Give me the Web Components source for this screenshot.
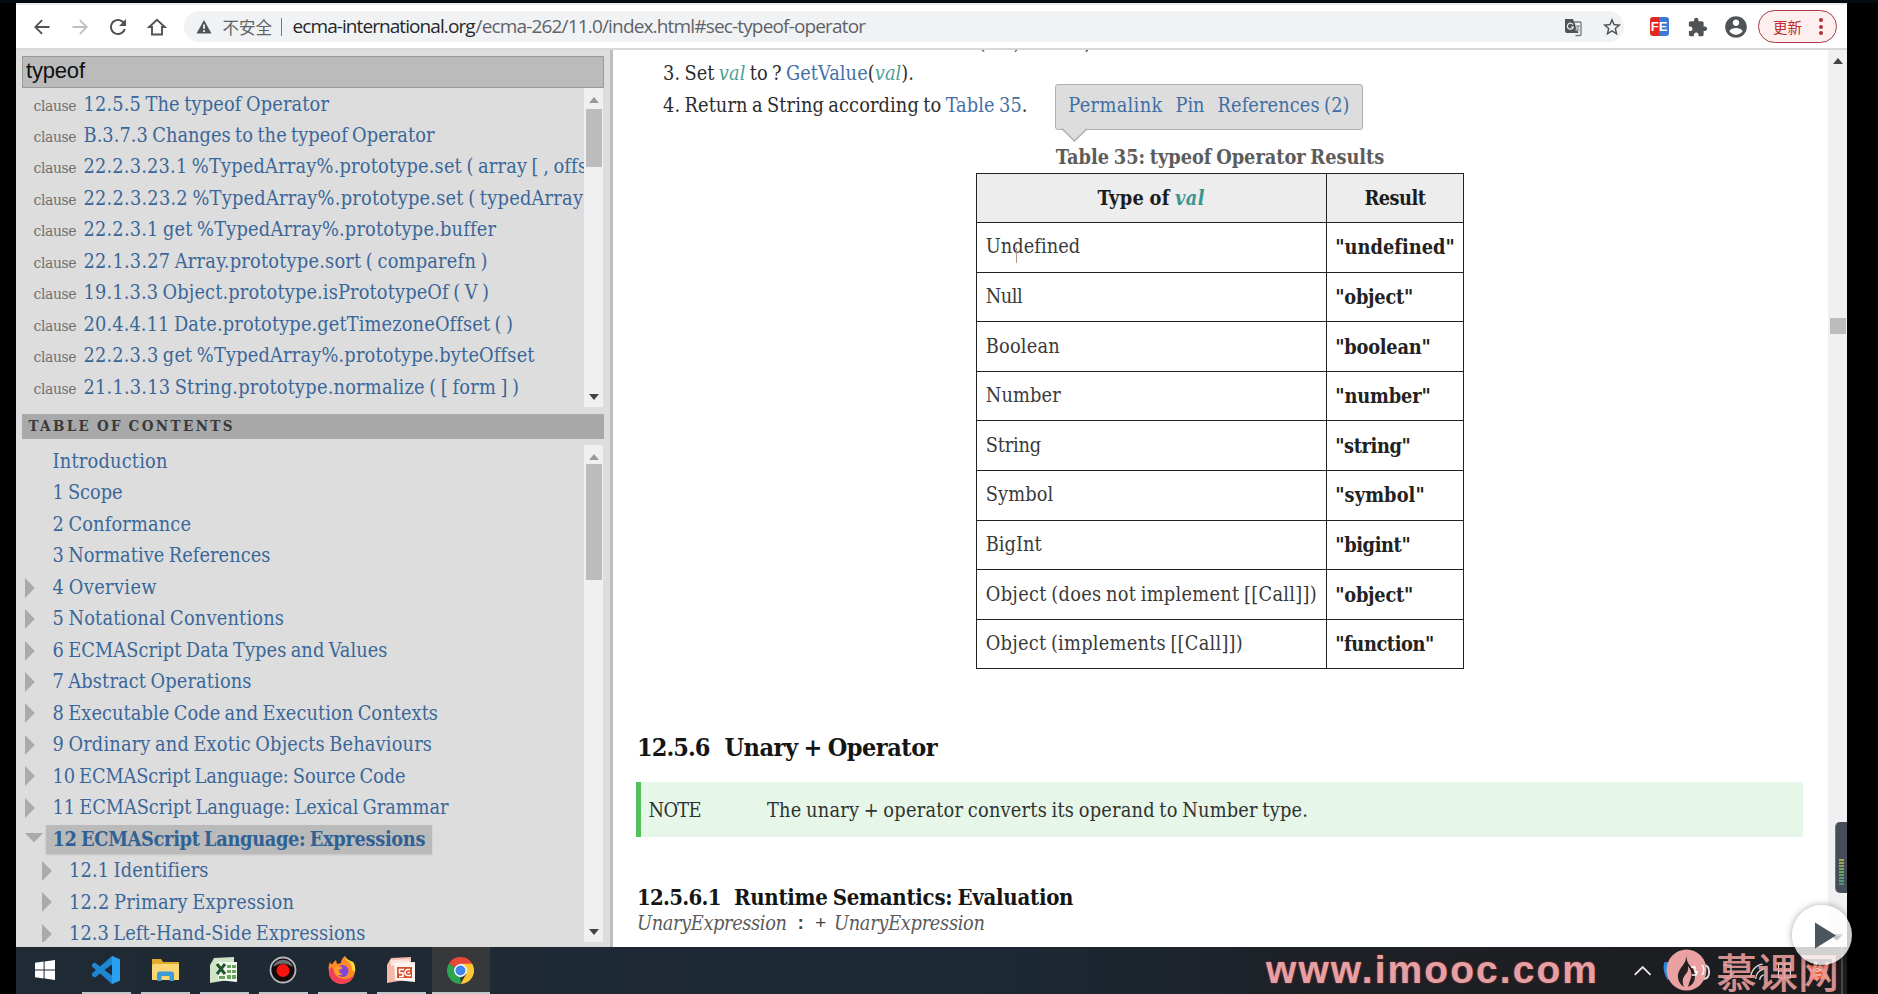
<!DOCTYPE html>
<html lang="zh-CN">
<head>
<meta charset="utf-8">
<title>ECMAScript 2020 Language Specification</title>
<style>
  html, body { margin: 0; background: #000; height: 994px; overflow: hidden; }
  body {
    --serif: "DejaVu Serif Condensed", "DejaVu Serif", "Liberation Serif", serif;
    --size: 19.8px;
    --link: #3a6799;
    font-family: var(--serif);
    font-size: var(--size);
    color: #3a3a3a;
    word-spacing: -1.4px;
  }
</style>
</head>
<body>
<screen-frame>
  <browser-bar slot="bar"></browser-bar>

  <side-panel slot="side">
    <result-item slot="result" w="245.5">12.5.5 The typeof Operator</result-item>
    <result-item slot="result" w="351">B.3.7.3 Changes to the typeof Operator</result-item>
    <result-item slot="result" w="503">22.2.3.23.1 %TypedArray%.prototype.set ( array [ , offs</result-item>
    <result-item slot="result" w="499.5">22.2.3.23.2 %TypedArray%.prototype.set ( typedArray</result-item>
    <result-item slot="result" w="412">22.2.3.1 get %TypedArray%.prototype.buffer</result-item>
    <result-item slot="result" w="404">22.1.3.27 Array.prototype.sort ( comparefn )</result-item>
    <result-item slot="result" w="405.5">19.1.3.3 Object.prototype.isPrototypeOf ( V )</result-item>
    <result-item slot="result" w="429">20.4.4.11 Date.prototype.getTimezoneOffset ( )</result-item>
    <result-item slot="result" w="450.5">22.2.3.3 get %TypedArray%.prototype.byteOffset</result-item>
    <result-item slot="result" w="435.5">21.1.3.13 String.prototype.normalize ( [ form ] )</result-item>

    <toc-item slot="toc" leaf w="115">Introduction</toc-item>
    <toc-item slot="toc" leaf w="70">1 Scope</toc-item>
    <toc-item slot="toc" leaf w="138.5">2 Conformance</toc-item>
    <toc-item slot="toc" leaf w="218">3 Normative References</toc-item>
    <toc-item slot="toc" w="104">4 Overview</toc-item>
    <toc-item slot="toc" w="231.5">5 Notational Conventions</toc-item>
    <toc-item slot="toc" w="335">6 ECMAScript Data Types and Values</toc-item>
    <toc-item slot="toc" w="199">7 Abstract Operations</toc-item>
    <toc-item slot="toc" w="385.5">8 Executable Code and Execution Contexts</toc-item>
    <toc-item slot="toc" w="379.5">9 Ordinary and Exotic Objects Behaviours</toc-item>
    <toc-item slot="toc" w="353">10 ECMAScript Language: Source Code</toc-item>
    <toc-item slot="toc" w="396">11 ECMAScript Language: Lexical Grammar</toc-item>
    <toc-item slot="toc" open w="373">12 ECMAScript Language: Expressions</toc-item>
    <toc-item slot="toc" sub w="139">12.1 Identifiers</toc-item>
    <toc-item slot="toc" sub w="225">12.2 Primary Expression</toc-item>
    <toc-item slot="toc" sub w="296.5">12.3 Left-Hand-Side Expressions</toc-item>
  </side-panel>

  <spec-page slot="page"></spec-page>
  <task-bar slot="tasks"></task-bar>
</screen-frame>

<script>
const fits = [];
function define(name, css, html, setup) {
  const t = document.createElement('template');
  t.innerHTML = `<style>*{box-sizing:border-box}:host{box-sizing:border-box}${css}</style>${html}`;
  customElements.define(name, class extends HTMLElement {
    connectedCallback() {
      if (this.shadowRoot) return;
      this.attachShadow({ mode: 'open' }).append(t.content.cloneNode(true));
      if (setup) setup(this, this.shadowRoot);
    }
  });
}

/* A run of text spaced out to a measured width (attribute w). */
define('fit-text', `
  :host{display:inline-block;white-space:pre}
  span{display:inline-block;white-space:pre}`,
  `<span><slot></slot></span>`, el => fits.push(el));

define('scroll-bar', `
  :host{display:flex;flex-direction:column;align-items:center;width:19px;background:#f0f0f2;flex:none}
  svg{width:10px;height:6px;flex:none}
  .up{margin-top:var(--up,9px);fill:var(--upc,#999)}
  .thumb{width:16px;background:#bcbcbe;margin-top:var(--t);height:var(--h);flex:none}
  .down{margin-top:auto;margin-bottom:var(--dn,7px);fill:var(--dnc,#444)}`,
  `<svg class="up" viewBox="0 0 10 6"><path d="M0 6 5 0l5 6z"/></svg><div class="thumb"></div><svg class="down" viewBox="0 0 10 6"><path d="M0 0h10L5 6z"/></svg>`);

define('screen-frame', `
  :host{display:flex;flex-direction:column;width:1878px;height:994px;padding:3px 31px 0 16px;background:linear-gradient(#050c11 0 3px,#000 3px);position:relative;overflow:hidden}
  .mid{display:flex;height:898px;flex:none;background:#fff}
  .float{position:absolute;left:1792px;top:905px;width:60px;height:60px;border-radius:50%;background:rgba(255,255,255,.8);box-shadow:0 0 7px rgba(0,0,0,.35);display:flex;align-items:center;justify-content:center}
  .meter{position:absolute;left:1835px;top:822px;width:12px;height:71px;background:#454e58;border-radius:5px 0 0 5px;border-left:1px solid #6b747c;display:flex;align-items:flex-end;padding:0 0 7px 3px}
  .meter i{width:5px;height:27px;background:repeating-linear-gradient(rgba(69,78,88,0) 0 2px,#454e58 2px 3px),linear-gradient(#b3a84e,#61a865 50%,#4d8f88)}`,
  `<slot name="bar"></slot><div class="mid"><slot name="side"></slot><slot name="page"></slot></div><slot name="tasks"></slot>
   <div class="meter"><i></i></div>
   <div class="float"><svg width="60" height="60" viewBox="0 0 60 60"><path d="M40 31h9l-4.500 4.500z" fill="#c3c3c3"/><path d="M23 17.500v26L44 30.500z" fill="#4b555e"/></svg></div>`);

define('browser-bar', `
  :host{display:flex;align-items:center;height:47px;margin-bottom:-1px;position:relative;flex:none;background:#fff;border-top:2px solid #e6eaee;border-bottom:2px solid #d6d8da;padding:0 0 0 14px;font-family:"Open Sans","Noto Sans",sans-serif;font-size:19px;color:#5f6368;word-spacing:0}
  svg{width:24px;height:24px;flex:none;fill:#505356}
  .nav{display:flex;gap:14.200px}
  .pill{display:flex;align-items:center;height:31px;width:1440px;margin-left:15px;background:#f1f2f4;border-radius:16px;padding:0 0 0 8px;line-height:29px}
  .cjk{font:16.500px/30px "Noto Sans CJK SC",sans-serif;margin-left:7px;width:50px;white-space:nowrap}
  .sep{width:1px;height:18px;background:#777;margin:0 11px 0 8px}
  .host{color:#25282b;width:183px}
  .tr{margin-left:auto;width:20px}
  .star{width:20px;margin:0 2px 0 19px}
  .fe{margin-left:26px;width:19px;height:19px;border-radius:3px;background:linear-gradient(90deg,#e3261f 50%,#3b79d8 50%);color:#fff;font:bold 13px/19px "Liberation Sans",sans-serif;text-align:center}
  .pz{width:20px;height:20px;margin:0 0 0 19px}
  .av{width:26px;height:26px;margin-left:15.500px}
  .upd{display:flex;align-items:center;margin-left:9px;width:79px;height:33px;border:1.500px solid #ab3b42;border-radius:17px;background:#fdefee;color:#bd2e2b;font:14.500px/30px "Noto Sans CJK SC",sans-serif;padding-left:14px}
  .dots{display:grid;gap:2.500px;margin-left:17px}.dots i{width:4px;height:4px;border-radius:50%;background:#b3313a}`,
  `<div class="nav">
    <svg viewBox="0 0 24 24"><path d="M19.500 11.100H7.600l5.200-5.300-1.300-1.300L4 12l7.500 7.500 1.300-1.300-5.200-5.300h11.900z"/></svg>
    <svg viewBox="0 0 24 24" style="fill:#bdbfc1"><path d="M4.500 11.100h11.900l-5.200-5.300 1.300-1.300L20 12l-7.500 7.500-1.300-1.300 5.200-5.300H4.500z"/></svg>
    <svg viewBox="0 0 24 24"><path d="M17.650 6.350C16.200 4.900 14.210 4 12 4c-4.420 0-7.990 3.580-7.990 8s3.570 8 7.990 8c3.730 0 6.840-2.550 7.730-6h-2.080c-.82 2.330-3.040 4-5.650 4-3.310 0-6-2.690-6-6s2.690-6 6-6c1.660 0 3.140.69 4.220 1.780L13 11h7V4l-2.350 2.350z"/></svg>
    <svg viewBox="0 0 24 24"><path d="M4.200 12 12 4.700l7.800 7.300H17v7.500H7V12z" fill="none" stroke="#505356" stroke-width="1.900"/></svg>
  </div>
  <div class="pill">
    <svg viewBox="0 0 24 24"><path d="M12 5 4.500 18.500h15z"/><path d="M11.200 9.500h1.700v4.300h-1.700zM11.200 15.200h1.700v1.700h-1.700z" fill="#fff"/></svg>
    <span class="cjk">不安全</span><span class="sep"></span>
    <fit-text class="host" w="183">ecma-international.org</fit-text><fit-text w="390.500">/ecma-262/11.0/index.html#sec-typeof-operator</fit-text>
    <svg class="tr" viewBox="0 0 20 20"><path d="M2 2h8l5.500 14H4a2 2 0 0 1-2-2z"/><path d="M10.500 5H17a1 1 0 0 1 1 1v11.500a1 1 0 0 1-1 1h-4.500" fill="none" stroke="#777" stroke-width="1.300"/><path d="M10 7.700a3 3 0 1 0 .3 2.300H7.800M12.500 9h4.500M15 9c0 2-1 3.500-2.300 4.500M13 10.500l3.500 3.500" fill="none" stroke="#f1f2f4" stroke-width="1.200"/><path d="M12.500 9h4.500M15.500 9c0 2-1 3.500-2.300 4.500M13.500 10.500l3 3.500" fill="none" stroke="#777"/></svg>
    <svg class="star" viewBox="1 1 22 22"><path d="M22 9.240l-7.190-.62L12 2 9.190 8.630 2 9.240l5.460 4.730L5.820 21 12 17.270 18.180 21l-1.630-7.030L22 9.240zM12 15.400l-3.760 2.270 1-4.280-3.320-2.880 4.380-.38L12 6.100l1.710 4.040 4.380.38-3.320 2.880 1 4.280L12 15.400z"/></svg>
  </div>
  <span class="fe">FE</span>
  <svg class="pz" viewBox="1 0 23 23"><path d="M20.500 11H19V7c0-1.100-.9-2-2-2h-4V3.500C13 2.120 11.880 1 10.500 1S8 2.120 8 3.500V5H4c-1.100 0-1.990.9-1.990 2v3.800H3.500c1.490 0 2.700 1.210 2.700 2.700s-1.210 2.700-2.700 2.700H2V20c0 1.100.9 2 2 2h3.800v-1.500c0-1.490 1.210-2.700 2.700-2.700 1.490 0 2.700 1.210 2.700 2.700V22H17c1.100 0 2-.9 2-2v-4h1.500c1.380 0 2.500-1.120 2.500-2.500S21.880 11 20.500 11z"/></svg>
  <svg class="av" viewBox="0 0 24 24"><path d="M12 2C6.480 2 2 6.480 2 12s4.480 10 10 10 10-4.480 10-10S17.520 2 12 2zm0 3c1.660 0 3 1.340 3 3s-1.340 3-3 3-3-1.340-3-3 1.340-3 3-3zm0 14.200c-2.500 0-4.710-1.280-6-3.220.03-1.990 4-3.080 6-3.080 1.990 0 5.970 1.090 6 3.080-1.290 1.940-3.500 3.220-6 3.220z"/></svg>
  <span class="upd">更新<span class="dots"><i></i><i></i><i></i></span></span>`);

define('side-panel', `
  :host{display:flex;flex-direction:column;width:596.500px;height:898px;flex:none;background:#ddd;border-right:3px solid #bdbdc0;padding:7px 0 0 6px;overflow:hidden}
  .search{width:582px;height:32px;flex:none;background:#bbb;border:1px solid #999;font:22px/28px "Liberation Sans",sans-serif;color:#111;padding-left:3px}
  .list{display:flex;width:581px;flex:none}
  .rows{flex:1;overflow:hidden;min-width:0;padding-top:.5px}
  .results{height:319px}
  .head{width:582px;height:25.500px;flex:none;margin-top:6.500px;background:#a9a9a9;font-weight:bold;font-size:15px;line-height:25.500px;color:#3a3a3a;padding-left:6.500px}
  .toc{height:497px;margin-top:6px}
  .toc .rows{padding-top:1px}
  .a{--t:5.500px;--h:58px}
  .b{--t:4px;--h:116px}`,
  `<div class="search"><fit-text w="59">typeof</fit-text></div>
   <div class="list results"><div class="rows"><slot name="result"></slot></div><scroll-bar class="a"></scroll-bar></div>
   <div class="head"><fit-text w="204">TABLE OF CONTENTS</fit-text></div>
   <div class="list toc"><div class="rows"><slot name="toc"></slot></div><scroll-bar class="b"></scroll-bar></div>`);

define('result-item', `
  :host{display:flex;align-items:baseline;height:31.470px;line-height:31.470px;white-space:nowrap;color:var(--link);padding-left:11.500px}
  small{font-size:15.500px;color:#707070;width:50px;flex:none}`,
  `<small><fit-text w="43">clause</fit-text></small><fit-text id="t"><slot></slot></fit-text>`,
  (el, r) => r.getElementById('t').setAttribute('w', el.getAttribute('w')));

define('toc-item', `
  :host{display:flex;align-items:center;height:31.470px;line-height:31.470px;white-space:nowrap;color:var(--link);padding-left:3px}
  :host([sub]){padding-left:19.500px}
  svg{width:19px;height:20px;fill:#aaa;flex:none;margin-right:1.500px}
  .label{padding:0 7px 0 7px}
  :host([leaf]) svg{visibility:hidden}
  .v{display:none}
  :host([open]) .v{display:block}
  :host([open]) .h{display:none}
  :host([open]) .label{font-weight:bold;color:#2f6195;background:#bababa;line-height:29px;height:29px;box-shadow:0 1px 2px rgba(0,0,0,.12)}`,
  `<svg viewBox="0 0 19 20"><path class="h" d="M0 0v20L9.800 10z"/><path class="v" d="M0 4h18L9 13.500z"/></svg><span class="label"><fit-text id="t"><slot></slot></fit-text></span>`,
  (el, r) => r.getElementById('t').setAttribute('w', el.getAttribute('w')));

define('hover-menu', `
  :host{position:absolute;left:79px;top:-57px;width:308px;height:45.500px;background:#ddd;border:1.500px solid #b0b0b0;border-radius:3px;display:flex;align-items:center;padding-left:12.500px;gap:13px;color:#416fa3;line-height:42px}
  svg{position:absolute;left:5px;top:42.500px}
  fit-text{margin-top:-1px}`,
  `<fit-text w="94">Permalink</fit-text><fit-text w="29">Pin</fit-text><fit-text w="132">References (2)</fit-text>
   <svg width="27" height="14" viewBox="0 0 27 14"><path d="M1 0 13.500 13 26 0z" fill="#ddd"/><path d="M1 .8 13.500 13 26 .8" fill="none" stroke="#b0b0b0" stroke-width="1.500"/></svg>`);

define('results-table', `
  :host{display:block;position:relative;width:488.500px;margin:20px auto 0}
  .cap{display:block;text-align:center;font-weight:bold;color:#5c5c5c;line-height:32px;height:31.500px}
  table{border-collapse:collapse;table-layout:fixed;width:488.500px}
  th,td{border:1.500px solid #222;height:49.600px;padding:0 0 0 9px;line-height:30px;text-align:left}
  th{background:#ededee;color:#1c1c1c;text-align:center;padding:0}
  td+td{font-weight:bold;color:#222;padding-left:8.500px}
  em{color:#3f9490}
  .beam{position:absolute;left:40px;top:107px;width:1px;height:15px;background:#a98}`,
  `<span class="cap"><fit-text w="328.500">Table 35: typeof Operator Results</fit-text></span>
   <table><colgroup><col style="width:350px"><col></colgroup><thead><tr><th><fit-text w="107">Type of <em>val</em></fit-text></th><th><fit-text w="61.500">Result</fit-text></th></tr></thead><tbody></tbody></table>
   <span class="beam"></span><hover-menu></hover-menu>`,
  (el, r) => {
    const rows = [['Undefined', 94, '"undefined"', 118], ['Null', 37, '"object"', 78], ['Boolean', 74, '"boolean"', 95.5], ['Number', 75, '"number"', 95.5],
      ['String', 55.5, '"string"', 75.5], ['Symbol', 67.5, '"symbol"', 89.5], ['BigInt', 56, '"bigint"', 75.5],
      ['Object (does not implement [[Call]])', 331, '"object"', 78], ['Object (implements [[Call]])', 257, '"function"', 99]];
    r.querySelector('tbody').innerHTML = rows.map(([a, w, b, x]) =>
      `<tr><td><fit-text w="${w}">${a}</fit-text></td><td><fit-text w="${x}">${b}</fit-text></td></tr>`).join('');
  });

define('spec-note', `
  :host{display:flex;align-items:center;height:55px;margin:14.500px 0 0 -1px;width:1167px;border-left:5.500px solid #52c15c;background:#e6f6e8;padding:1px 0 0 7.500px;color:#2f3330}
  .n{width:118.500px}`,
  `<span class="n"><fit-text w="53">NOTE</fit-text></span><fit-text w="541">The unary + operator converts its operand to Number type.</fit-text>`);

define('spec-page', `
  :host{display:flex;flex:1;height:898px;overflow:hidden;background:#fff;min-width:0}
  main{flex:1;min-width:0;padding-left:24.500px;overflow:hidden}
  .steps{margin:-22.500px 0 0;line-height:31.500px;color:#2c2c2c}
  .steps div{height:31.500px;padding-left:26px;white-space:nowrap}
  .steps .cut{padding-left:341.500px}
  a{color:#4470a6}em{color:#4f9f97}
  .fig{width:1166px}
  h2{font-size:25px;line-height:40px;height:40px;margin:58.500px 0 0;color:#151515;display:flex}
  h3{font-size:22px;line-height:31px;height:30px;margin:45px 0 0;color:#151515;display:flex}
  .g{display:flex;line-height:24px;height:24px;color:#5a5a5a;font-style:italic;margin-top:0}
  b{font:bold 19px/24px "Liberation Mono",monospace;width:20px;color:#444}
  b+b{width:19px;font-weight:normal}
  scroll-bar{--up:9px;--upc:#444;--t:254px;--h:16px}`,
  `<main>
    <div class="steps">
      <div class="cut"><fit-text w="112">(<em>val</em>) is true,</fit-text></div>
      <div><fit-text w="251">3. Set <em>val</em> to ? <a>GetValue</a>(<em>val</em>).</fit-text></div>
      <div><fit-text w="364.500">4. Return a String according to <a>Table 35</a>.</fit-text></div>
    </div>
    <div class="fig"><results-table></results-table></div>
    <h2><fit-text w="73.500" style="width:87.500px">12.5.6</fit-text><fit-text w="213">Unary + Operator</fit-text></h2>
    <spec-note></spec-note>
    <h3><fit-text w="84.500" style="width:97px">12.5.6.1</fit-text><fit-text w="339.500">Runtime Semantics: Evaluation</fit-text></h3>
    <div class="g"><fit-text w="150" style="width:158px">UnaryExpression</fit-text><b>:</b><b>+</b><fit-text w="151">UnaryExpression</fit-text></div>
  </main><scroll-bar></scroll-bar>`);

define('task-icon', `
  :host{display:flex;width:49px;height:47px;margin-right:10px;align-items:center;justify-content:center;border-bottom:2px solid #c3c6c9;flex:none;padding-top:1px}
  :host([plain]){border-color:transparent;width:58px;margin-right:7.500px}
  :host([active]){width:58px;background:#363839;margin-left:-4px}`,
  `<slot></slot>`);

define('task-bar', `
  :host{display:flex;height:47px;flex:none;background:linear-gradient(90deg,#1f2a35,#1c2833 55%,#1d2025 72%,#1c1c1e);position:relative}
  svg{display:block}
  .sp{flex:1}
  .tray{display:flex;width:240px;height:47px;align-items:center;border-right:2px solid #45484b;margin-right:4px}
  .mark{position:absolute;left:1250px;top:0;height:46px;display:flex;align-items:center}
  .url{font:bold 39px/46px "Liberation Sans",sans-serif;width:413px;color:#e5a0a3;text-shadow:0 0 2px #a83a40}
  .cn{font:500 41px/46px "Noto Sans CJK SC",sans-serif;margin-left:9px;color:rgba(236,160,158,.88)}`,
  `<task-icon plain><svg width="20" height="20" viewBox="0 0 20 20" fill="#fff"><path d="M0 2.800 8.600 1.600v7.900H0zM9.600 1.500 20 0v9.500H9.600zM0 10.500h8.600v7.900L0 17.200zM9.600 10.500H20V20L9.600 18.500z"/></svg></task-icon>
   <task-icon><svg width="29" height="28" viewBox="0 0 29 28"><path d="M20 0 28 3.500v21L20 28 8 17.500 3 21.500 0 20v-2.500L4 14 0 10.500V8l3-1.500 5 4z" fill="#1e86d2"/><path d="M20.500 8v12L12.500 14z" fill="#1f2a35"/><path d="M20 0 28 3.500v21L20 28z" fill="#2aa1f0"/></svg></task-icon>
   <task-icon><svg width="27" height="24" viewBox="0 0 27 24"><path d="M0 1h9l2 3h16v18H0z" fill="#e5a92d"/><path d="M1 6h26v16H0V8z" fill="#fad775"/><path d="M5 23v-7q0-2.500 2.500-2.500h12Q22 13.500 22 16v7h-4.500v-5h-8v5z" fill="#3e9bd8"/></svg></task-icon>
   <task-icon><svg width="28" height="27" viewBox="0 0 28 27"><path d="M4 1 24 0v22L0 26V8z" fill="#cfe3c6"/><path d="M7 5h20v20l-19-2z" fill="#f2f8ee"/><g fill="#6aa35b"><path d="M17 8h4v3h-4zM22 8h4v3h-4zM17 13h4v3h-4zM22 13h4v3h-4zM17 18h4v4h-4zM22 18h4v4h-4zM9 19h6v3H9z"/></g><path d="m7 7 8 10M15 7 7 17" stroke="#20552b" stroke-width="3"/></svg></task-icon>
   <task-icon><svg width="28" height="28" viewBox="0 0 28 28"><circle cx="14" cy="14" r="12.500" fill="#15090b" stroke="#b4b9bd" stroke-width="1.800"/><path d="M4 11a10.500 10.500 0 0 1 20 0Q14 4 4 11z" fill="#6b6e70"/><circle cx="14" cy="14.500" r="6.500" fill="#f8140d"/></svg></task-icon>
   <task-icon><svg width="28" height="28" viewBox="0 0 28 28"><path d="M2 6q1 2 2 2.500Q6 5 8 4l1 4 4-1q0-4 4-7 1 4 4 6l3 0q4 5 3 10-2 11-13 12Q2 27 1 16 0 10 2 6z" fill="#ff8a26"/><path d="M17 0q0 4 4 6 3 3 3 8l3 2Q28 6 23 5 18 3 17 0z" fill="#ffd83c"/><path d="M1 16q1 11 13 12 9-1 12-9-5 5-11 4Q6 22 5 12q-3-2-4 4z" fill="#f2405b"/><circle cx="14.500" cy="15" r="6" fill="#8146d6"/><path d="M6 12q4-4 9 0l-4 2q0 4 4 4-5 3-8-1z" fill="#ff9c2c"/></svg></task-icon>
   <task-icon><svg width="28" height="27" viewBox="0 0 28 27"><path d="M4 1 24 0v22L0 26V8z" fill="#f5b9a8"/><path d="M3 3 22 2l1 4L4 9z" fill="#fbe3dc"/><path d="M7 6 28 5v20L8 23z" fill="#fff4ef"/><path d="M10 10h15v11H10z" fill="#d6502b"/><path d="M17 12.500h-4.500v3.500H16v3.500h-4M23 12.500h-2a2.500 2.500 0 0 0 0 6h3M20.500 15.500H23" fill="none" stroke="#fff" stroke-width="1.600"/></svg></task-icon>
   <task-icon active><svg width="27" height="27" viewBox="0 0 27 27"><path d="M13.500 13.500 1.800 6.750A13.500 13.500 0 0 1 25.200 6.750z" fill="#e8483b"/><path d="M13.500 13.500V27A13.500 13.500 0 0 1 1.800 6.750z" fill="#2da44f"/><path d="M13.500 6.750H25.200A13.500 13.500 0 0 1 13.500 27l5.800-10z" fill="#fbc734"/><circle cx="13.500" cy="13.500" r="6.400" fill="#fff"/><circle cx="13.500" cy="13.500" r="5" fill="#4383ee"/></svg></task-icon>
   <span class="sp"></span>
   <div class="tray"><svg width="240" height="46" viewBox="1603 948 240 46" fill="none"><path d="m1635 975 8-8 8 8" stroke="#e8e8e8" stroke-width="1.800"/><path d="M1665 962q-3 8 3 18l5-2v-16z" fill="#268bdc"/><path d="M1704 965q6 0 6 7t-6 7" stroke="#ddd" stroke-width="2"/><path d="M1724 965h8v13h-8M1752 978a14 14 0 0 1 12-14M1757 979a10 10 0 0 1 8-10M1761 980a6 6 0 0 1 4-5" stroke="#ddd" stroke-width="1.300"/><path d="M1780 964h12v14h-12zM1780 971h12M1786 964v14" stroke="#ddd" stroke-width="1.200"/><path d="m1809 964 6 2 8 0 6-2-1 8 3 8-8-1-6 1-6-1 1-7z" fill="#f0603c"/><path d="M1815 970q4-3 8 0-4 3-8 0zM1815 975h8" stroke="#fff"/></svg></div>
   <div class="mark"><span class="url"><fit-text w="331">www.imooc.com</fit-text></span>
     <svg width="41" height="42" viewBox="0 0 41 42" style="margin-left:-13px"><ellipse cx="20.500" cy="21" rx="20" ry="20.500" fill="#e9a2a1"/><path d="M20 4q1 7-3 12-6 7-5 13 1 6 6 9-3-7 1-12 4-4 3-9 5 6 3 12-2 5-3 9 7-3 7-11 0-6-4-9-5-5-5-14z" fill="#242021"/><path d="M25 18h4v5h3M26 26h4l1-4M36 16q4 5 0 10" fill="none" stroke="#fff" stroke-width="1.300"/></svg>
     <span class="cn">慕课网</span></div>`);

/* Spread every measured run over its width, now that all are laid out. */
for (const el of fits) {
  const w = parseFloat(el.getAttribute('w'));
  if (!w) continue;
  const s = el.shadowRoot.querySelector('span');
  const slot = el.querySelector('slot');
  const text = slot ? slot.assignedNodes().map(n => n.textContent).join('') : el.textContent;
  s.style.letterSpacing = ((w - s.getBoundingClientRect().width) / (text.length - 1)) + 'px';
}
</script>
</body>
</html>
